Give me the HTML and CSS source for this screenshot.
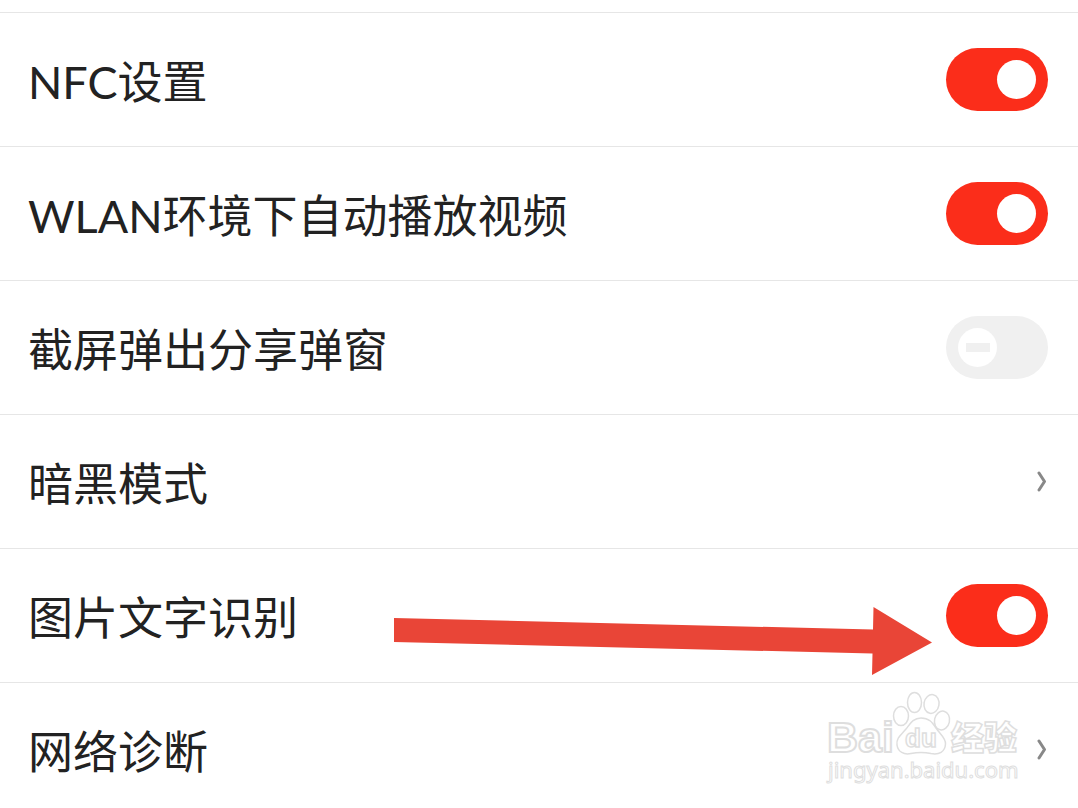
FILE: index.html
```html
<!DOCTYPE html>
<html lang="zh-CN">
<head>
    <meta charset="UTF-8">
    <meta name="viewport" content="width=device-width, initial-scale=1.0">
    <title>设置</title>
    <link rel="stylesheet" href="styles.css">
</head>
<body>
    <main class="settings">
        <div class="row">
            <label class="row-title" for="nfc">NFC设置</label>
            <input class="switch" type="checkbox" id="nfc" checked>
        </div>
        <div class="row">
            <label class="row-title" for="autoplay">WLAN环境下自动播放视频</label>
            <input class="switch" type="checkbox" id="autoplay" checked>
        </div>
        <div class="row">
            <label class="row-title" for="share">截屏弹出分享弹窗</label>
            <input class="switch" type="checkbox" id="share">
        </div>
        <a class="row" href="#dark">
            <span class="row-title">暗黑模式</span>
            <svg class="chevron" viewBox="0 0 12 22" aria-hidden="true"><path d="M3 2L8.500 10.500L3 19"/></svg>
        </a>
        <div class="row">
            <label class="row-title" for="ocr">图片文字识别</label>
            <input class="switch" type="checkbox" id="ocr" checked>
            <!-- Pointer arrow -->
            <svg class="arrow" viewBox="0 0 538 68" aria-hidden="true"><path d="M0 11L479 22.500L479.500 0L538 35.500L478 68L478.500 46.500L0 35Z"/></svg>
        </div>
        <a class="row" href="#network">
            <span class="row-title">网络诊断</span>
            <svg class="chevron" viewBox="0 0 12 22" aria-hidden="true"><path d="M3 2L8.500 10.500L3 19"/></svg>
            <!-- Watermark -->
            <svg class="watermark" viewBox="0 0 200 98">
                <g class="mark">
                    <text class="mark-bai" x="3" y="62">Bai</text>
                    <ellipse cx="77" cy="26" rx="7.500" ry="9.500"/>
                    <ellipse cx="90.500" cy="12.500" rx="7" ry="10"/>
                    <ellipse cx="107.500" cy="14" rx="7.500" ry="9.500" transform="rotate(10 107.500 14)"/>
                    <ellipse cx="118" cy="30.500" rx="7.500" ry="9.500" transform="rotate(12 118 30.500)"/>
                    <path d="M97 28C89 28 86 34 82 39C77 45 72 48 73 55C74 62 80 65 87 63.500C94 62 100 62 107 63.500C115 65 121 62 121.500 54C122 48 116 44 112 38C108 32 105 28 97 28Z"/>
                    <text class="mark-du" x="81" y="57">du</text>
                    <text class="mark-jingyan" x="127" y="60">经验</text>
                    <text class="mark-url" x="4" y="88">jingyan.baidu.com</text>
                </g>
            </svg>
        </a>
    </main>
</body>
</html>
```

FILE: styles.css
```css
* {
    box-sizing: border-box;
}
body {
    margin: 0;
    height: 100vh;
    overflow: hidden;
    background-color: #fff;
    color: #222;
    font-family: Lato, "Noto Sans CJK SC", sans-serif;
    font-size: 45px;
    line-height: 66px;
}
.settings {
    padding-top: 12px;
}
.row {
    position: relative;
    display: flex;
    align-items: center;
    justify-content: space-between;
    min-height: 134px;
    padding: 0 30px 0 28px;
    border-top: 1px solid #e6e6e6;
    color: inherit;
    text-decoration: none;
}
.row-title {
    padding-top: 4px;
}
.switch {
    appearance: none;
    display: flex;
    align-items: center;
    flex: none;
    width: 102px;
    height: 63px;
    margin: 0;
    padding: 0 12px;
    border-radius: 32px;
    background-color: #f0f0f0;
}
.switch::before {
    content: "";
    width: 39px;
    height: 39px;
    border-radius: 50%;
    background: linear-gradient(#f0f0f0, #f0f0f0) center / 24px 9px no-repeat #fff;
}
.switch:checked {
    justify-content: flex-end;
    background-color: #fb2d1a;
}
.switch:checked::before {
    background: #fff;
}
.chevron {
    width: 12px;
    height: 22px;
    fill: none;
    stroke: #888;
    stroke-width: 3;
    stroke-linecap: round;
    stroke-linejoin: round;
}
.arrow {
    position: absolute;
    top: 58px;
    right: 146px;
    width: 538px;
    height: 68px;
    fill: #e94537;
}
.watermark {
    position: absolute;
    top: 7px;
    right: 54px;
    width: 200px;
    height: 98px;
    overflow: visible;
}
.mark {
    fill: #fff;
    stroke: #dedede;
    stroke-width: 1.5;
}
.mark-bai {
    font: bold 43px "Liberation Sans", sans-serif;
    stroke-width: 2;
}
.mark-du {
    font: bold 26px "Liberation Sans", sans-serif;
}
.mark-jingyan {
    font: 900 33px "Noto Sans CJK SC", sans-serif;
}
.mark-url {
    font: 22px "Noto Sans", sans-serif;
    stroke-width: 1;
}
```
